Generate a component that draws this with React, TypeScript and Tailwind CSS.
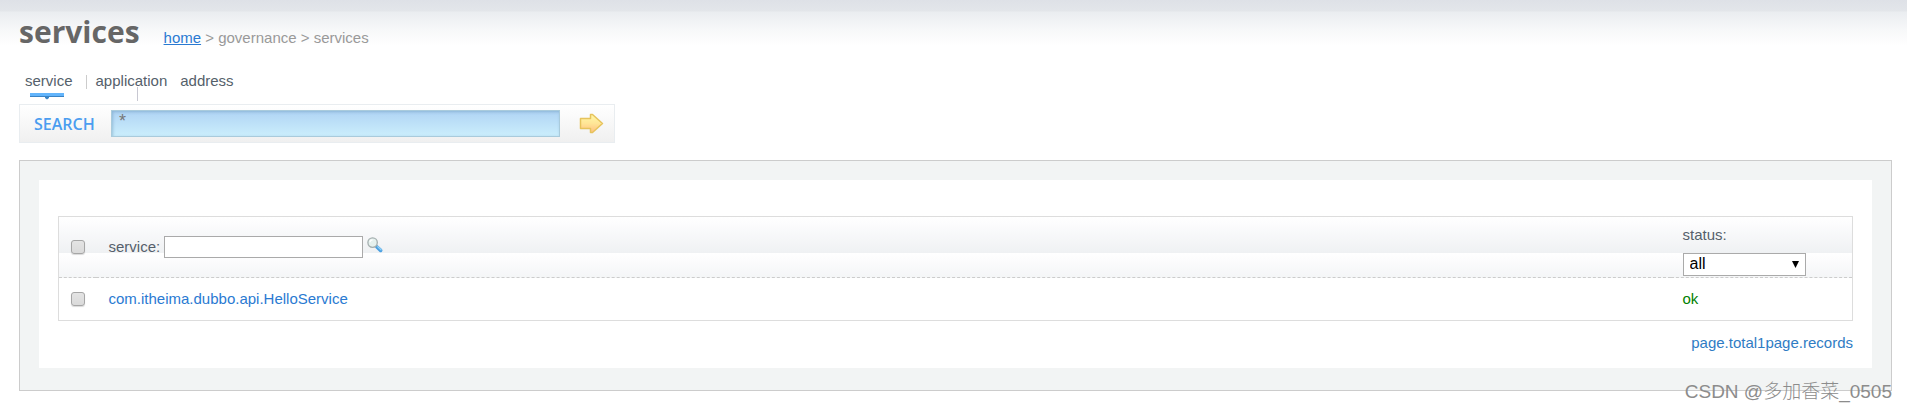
import { useState } from 'react';

interface ServiceRow {
    name: string;
    status: string;
}

const rows: ServiceRow[] = [{ name: 'com.itheima.dubbo.api.HelloService', status: 'ok' }];

const checkboxClass =
    'block w-3.5 h-3.5 appearance-none rounded-[3px] border border-[#a6a6a6] bg-linear-to-b from-[#e4e4e4] to-[#dadada] shadow-[0_1px_1px_rgba(0,0,0,0.15)] checked:bg-[#7fb2e5]';

function ArrowIcon() {
    return (
        <svg width="25" height="21" viewBox="0 0 25 21" aria-hidden="true">
            <defs>
                <linearGradient id="arrowFill" x1="0" y1="0" x2="0" y2="1">
                    <stop offset="0" stopColor="#fff8a8" />
                    <stop offset="0.5" stopColor="#ffe596" />
                    <stop offset="1" stopColor="#ffc080" />
                </linearGradient>
            </defs>
            <path
                d="M1.5 5.5H11.5V1.5H13.5L23.5 10.5L13.5 19.5H11.5V15.5H1.5Z"
                fill="url(#arrowFill)"
                stroke="#e6c35c"
                strokeWidth="1.5"
                strokeLinejoin="round"
            />
        </svg>
    );
}

function MagnifierIcon() {
    return (
        <svg width="16" height="16" viewBox="0 0 16 16" aria-hidden="true">
            <path d="M10 10L13.6 13.4" stroke="#4a9fe0" strokeWidth="3.6" strokeLinecap="round" />
            <path d="M10.8 9.8L14 12.8" stroke="#8fd0f8" strokeWidth="1.4" strokeLinecap="round" />
            <circle cx="5.6" cy="5.6" r="4.7" fill="#e6f1ee" stroke="#a3aeae" strokeWidth="1.3" />
            <path d="M3 5.2A2.8 2.8 0 0 1 5.6 2.8" fill="none" stroke="#fff" strokeWidth="1.2" />
        </svg>
    );
}

function ActiveMarker() {
    return (
        <svg className="absolute left-[5px] top-[22px]" width="34" height="7" viewBox="0 0 34 7" aria-hidden="true">
            <rect width="34" height="3" fill="#62b4fb" />
            <rect y="3" width="34" height="1" fill="#3a83c4" />
            <path d="M15 4H19V5L17 6.5L15 5Z" fill="#3a83c4" />
        </svg>
    );
}

export default function App() {
    const [query, setQuery] = useState('*');
    const [filter, setFilter] = useState('');

    return (
        <div className="relative bg-white bg-[linear-gradient(#dee1e7,#e3e6ea_11px,#eaedf0_12px,#f7f8f9_30px,#fff_46px)] pl-[19px] pr-[15px] pb-[17px] font-['Liberation_Sans',Arial,sans-serif] text-[15px] leading-5 text-[#555f6b]">
            {/* Title and breadcrumb */}
            <header className="flex items-baseline gap-6 pt-2.5">
                <h1 className="font-['Open_Sans','Noto_Sans',sans-serif] text-[30px] leading-11 font-bold text-[#666]">services</h1>
                <nav className="text-[#999]">
                    <a href="#home" className="text-[#2a7ad2] underline">home</a> &gt; governance &gt; services
                </nav>
            </header>

            {/* Tabs */}
            <nav className="flex items-start pt-[17px] pb-[13px] pl-1.5">
                <a href="#service" className="relative">
                    service
                    <ActiveMarker />
                </a>
                <span className="ml-[13px] mt-1 h-3.5 w-px bg-[#ccc]" />
                <a href="#application" className="relative ml-[9px]">
                    application
                    <span className="absolute left-[41px] top-4 h-3.5 w-px bg-[#c8c8d2]" />
                </a>
                <a href="#address" className="ml-[13px]">address</a>
            </nav>

            {/* Search bar */}
            <form
                className="flex h-[39px] w-full max-w-[596px] items-center border border-[#e9edf0] bg-linear-to-b from-white to-[#f0f0f0] pl-3.5 pr-2.5"
                onSubmit={(e) => e.preventDefault()}
            >
                <label htmlFor="query" className="w-[77px] font-['Open_Sans','Noto_Sans',sans-serif] text-base font-semibold text-[#4b9df0]">
                    SEARCH
                </label>
                <input
                    id="query"
                    value={query}
                    onChange={(e) => setQuery(e.target.value)}
                    className="h-[27px] min-w-0 flex-1 border border-[#a9cbdc] bg-linear-to-b from-[#b0d4f4] to-[#cbeefc] px-[7px] pb-1 text-lg leading-5 text-[#777] shadow-[inset_1px_1px_3px_rgba(70,120,160,0.35)] outline-none"
                />
                <button type="submit" aria-label="Search" className="ml-[19px]">
                    <ArrowIcon />
                </button>
            </form>

            {/* Content panel */}
            <main className="mt-[17px] border border-[#ccc] bg-[#f2f4f4] px-[19px] pt-[19px] pb-[22px]">
                <div className="bg-white px-[19px] pt-9 pb-[15px]">
                    <table className="w-full border-collapse border border-[#ddd] text-left">
                        <thead>
                            <tr className="h-[61px] border-b border-dashed border-[#ccc] bg-[linear-gradient(#fff,#fcfcfd_20%,#eff1f3)] bg-[length:100%_36px]">
                                <th className="w-[37px] pl-3">
                                    <input type="checkbox" aria-label="Select all" className={checkboxClass} />
                                </th>
                                <th className="pl-[13px] font-normal">
                                    <div className="flex items-center gap-1">
                                        <label htmlFor="filter">service:</label>
                                        <input
                                            id="filter"
                                            value={filter}
                                            onChange={(e) => setFilter(e.target.value)}
                                            className="h-[22px] w-[199px] border border-[#aaa] bg-white px-1 outline-none"
                                        />
                                        <button type="button" aria-label="Filter" className="pb-1">
                                            <MagnifierIcon />
                                        </button>
                                    </div>
                                </th>
                                <th className="w-[182px] pl-3 font-normal">
                                    <label htmlFor="status" className="block pt-1.5 pb-2">status:</label>
                                    <div className="relative w-[123px]">
                                        <select
                                            id="status"
                                            className="block h-[23px] w-full appearance-none border border-[#aaa] bg-white px-1.5 text-base leading-5 text-black"
                                        >
                                            <option>all</option>
                                            <option>ok</option>
                                        </select>
                                        <svg className="pointer-events-none absolute right-[7px] top-2" width="7" height="7" viewBox="0 0 7 7" aria-hidden="true">
                                            <path d="M0 0H7L3.5 7Z" fill="#000" />
                                        </svg>
                                    </div>
                                </th>
                            </tr>
                        </thead>
                        <tbody>
                            {rows.map((row) => (
                                <tr key={row.name} className="h-[43px]">
                                    <td className="pl-3">
                                        <input type="checkbox" aria-label={row.name} className={checkboxClass} />
                                    </td>
                                    <td className="pl-[13px]">
                                        <a href="#detail" className="text-[#2a7ad2]">{row.name}</a>
                                    </td>
                                    <td className="pl-3 text-[#008000]">{row.status}</td>
                                </tr>
                            ))}
                        </tbody>
                    </table>
                    <p className="pt-3 text-right text-[#2f7cc4]">page.total1page.records</p>
                </div>
            </main>

            <span className="absolute right-[15px] bottom-1 font-['Liberation_Sans','Noto_Sans_CJK_SC',sans-serif] text-[19px] leading-6 font-light text-[#8c8c8c]">
                CSDN @多加香菜_0505
            </span>
        </div>
    );
}
